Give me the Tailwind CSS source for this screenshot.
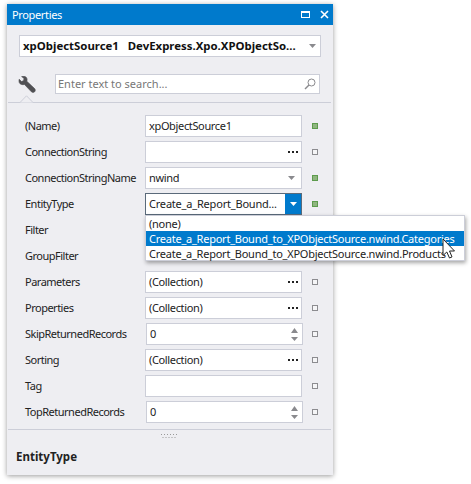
<!DOCTYPE html>
<html><head><meta charset="utf-8"><script src="https://cdn.jsdelivr.net/npm/@tailwindcss/browser@4"></script></head>
<body class="bg-white">
<div class="w-[471px] h-[484px] overflow-hidden pt-[4px] pl-[7px] font-['Noto_Sans',sans-serif] text-[11px] leading-[16px] tracking-[-0.35px] text-[#222]">
<div class="relative w-[326px] h-[471px] bg-[#eeeef2] shadow-[0_1px_5px_rgba(0,0,0,0.4)] flex flex-col">
  <div class="h-[21px] bg-[#007acc] text-white flex items-center pl-[5px] pr-[4px] shrink-0">
    <span class="flex-1">Properties</span>
    <svg width="9" height="7" class="mr-[10px]"><rect x="0.5" y="1" width="8" height="5.500" fill="none" stroke="#fff"/><rect x="0" y="0" width="9" height="2" fill="#fff"/></svg>
    <svg width="9" height="9"><path d="M1 1L8 8M8 1L1 8" stroke="#fff" stroke-width="1.600"/></svg>
  </div>
  <div class="mt-[10px] mx-[12px] h-[22px] bg-white border border-[#ccced8] flex items-center pl-[3px] pr-[4px] shrink-0">
    <span class="flex-1 min-w-0 font-bold text-[11.4px] tracking-normal text-[#111] whitespace-pre">xpObjectSource1   DevExpress.Xpo.XPObjectSo...</span>
    <svg width="7" height="4" class="shrink-0"><path d="M0 0H7L3.500 4Z" fill="#8a8a8e"/></svg>
  </div>
  <div class="mt-[17px] ml-[1px] mr-[2px] h-[29px] relative shrink-0 border-b border-[#ccced8] flex items-start pl-[10px] pr-[11px]">
    <svg width="18" height="18" viewBox="0 0 18 18" class="mt-[2px] mr-[19px] shrink-0"><path d="M1.200 3.200L3.600 5.600L5.600 4.600L6 2.400L3.600 0.600C5.600-.2 8 .3 8.800 2.200C9.300 3.300 9.100 4.600 8.800 5.200L16.600 12.600C17.600 13.600 17.400 15 16.600 15.800C15.800 16.600 14.400 16.700 13.400 15.800L6.400 8.400C4.800 9 2.800 8.600 1.600 7.200C.9 6.200.8 4.600 1.200 3.200Z" fill="#505054" stroke="#505054" stroke-width=".6"/></svg>
    <div class="flex-1 h-[20px] bg-white border border-[#ccced8] flex items-center pl-[2px] pr-[3px] text-[#777] tracking-normal">
      <span class="flex-1">Enter text to search...</span>
      <svg width="12" height="12" viewBox="0 0 12 12"><circle cx="7.500" cy="4.500" r="3.500" fill="none" stroke="#8a8a8e"/><path d="M5 7L1 11" stroke="#8a8a8e" stroke-width="1.500"/></svg>
    </div>
    <svg width="16" height="8" class="absolute left-[11px] bottom-[-1px]"><path d="M0 7.500H1L7.500 .8L14 7.500H16" fill="#eeeef2" stroke="#ccced8"/></svg>
  </div>
  <div class="flex flex-col pt-[10px] pl-[18px] shrink-0">
    <div class="h-[26px] flex items-center"><span class="w-[120px] shrink-0 tracking-[-0.5px]">(Name)</span><div class="w-[157px] h-[22px] bg-white border border-[#ccced8] flex items-center pl-[3px]">xpObjectSource1</div><div class="ml-[10px] w-[6px] h-[6px] bg-[#8fb67f] border border-[#5d9b4d]"></div></div>
    <div class="h-[26px] flex items-center"><span class="w-[120px] shrink-0 tracking-[-0.5px]">ConnectionString</span><div class="w-[157px] h-[22px] bg-white border border-[#ccced8] flex items-center justify-end pr-[3px]"><svg width="10" height="2"><path d="M0 0h2v2H0zM4 0h2v2H4zM8 0h2v2H8z" fill="#222"/></svg></div><div class="ml-[10px] w-[6px] h-[6px] bg-[#f5f5f7] border border-[#8c8c90]"></div></div>
    <div class="h-[26px] flex items-center"><span class="w-[120px] shrink-0 tracking-[-0.5px]">ConnectionStringName</span><div class="w-[157px] h-[22px] bg-white border border-[#ccced8] flex items-center pl-[3px] pr-[6px]"><span class="flex-1">nwind</span><svg width="7" height="4"><path d="M0 0H7L3.500 4Z" fill="#8a8a8e"/></svg></div><div class="ml-[10px] w-[6px] h-[6px] bg-[#8fb67f] border border-[#5d9b4d]"></div></div>
    <div class="h-[26px] flex items-center"><span class="w-[120px] shrink-0 tracking-[-0.5px]">EntityType</span><div class="w-[157px] h-[22px] bg-white border border-[#5a6a7a] flex items-center pl-[3px]"><span class="flex-1 min-w-0 whitespace-nowrap overflow-hidden tracking-[-0.2px]">Create_a_Report_Bound...</span><div class="w-[16px] h-full bg-[#007acc] flex items-center justify-center shrink-0"><svg width="7" height="4"><path d="M0 0H7L3.500 4Z" fill="#fff"/></svg></div></div><div class="ml-[10px] w-[6px] h-[6px] bg-[#8fb67f] border border-[#5d9b4d]"></div></div>
    <div class="h-[26px] flex items-center"><span class="w-[120px] shrink-0 tracking-[-0.5px]">Filter</span></div>
    <div class="h-[26px] flex items-center"><span class="w-[120px] shrink-0 tracking-[-0.5px]">GroupFilter</span></div>
    <div class="h-[26px] flex items-center"><span class="w-[120px] shrink-0 tracking-[-0.5px]">Parameters</span><div class="w-[157px] h-[22px] bg-white border border-[#ccced8] flex items-center pl-[3px] pr-[3px]"><span class="flex-1">(Collection)</span><svg width="10" height="2"><path d="M0 0h2v2H0zM4 0h2v2H4zM8 0h2v2H8z" fill="#222"/></svg></div><div class="ml-[10px] w-[6px] h-[6px] bg-[#f5f5f7] border border-[#8c8c90]"></div></div>
    <div class="h-[26px] flex items-center"><span class="w-[120px] shrink-0 tracking-[-0.5px]">Properties</span><div class="w-[157px] h-[22px] bg-white border border-[#ccced8] flex items-center pl-[3px] pr-[3px]"><span class="flex-1">(Collection)</span><svg width="10" height="2"><path d="M0 0h2v2H0zM4 0h2v2H4zM8 0h2v2H8z" fill="#222"/></svg></div><div class="ml-[10px] w-[6px] h-[6px] bg-[#f5f5f7] border border-[#8c8c90]"></div></div>
    <div class="h-[26px] flex items-center"><span class="w-[121px] shrink-0 tracking-[-0.5px]">SkipReturnedRecords</span><div class="w-[157px] h-[22px] bg-white border border-[#ccced8] flex items-center pl-[3px] pr-[4px]"><span class="flex-1">0</span><svg width="7" height="13"><path d="M0 5L3.500 0L7 5ZM0 9H7L3.500 13Z" fill="#8a8a8e"/></svg></div><div class="ml-[9px] w-[6px] h-[6px] bg-[#f5f5f7] border border-[#8c8c90]"></div></div>
    <div class="h-[26px] flex items-center"><span class="w-[120px] shrink-0 tracking-[-0.5px]">Sorting</span><div class="w-[157px] h-[22px] bg-white border border-[#ccced8] flex items-center pl-[3px] pr-[3px]"><span class="flex-1">(Collection)</span><svg width="10" height="2"><path d="M0 0h2v2H0zM4 0h2v2H4zM8 0h2v2H8z" fill="#222"/></svg></div><div class="ml-[10px] w-[6px] h-[6px] bg-[#f5f5f7] border border-[#8c8c90]"></div></div>
    <div class="h-[26px] flex items-center"><span class="w-[120px] shrink-0 tracking-[-0.5px]">Tag</span><div class="w-[157px] h-[22px] bg-white border border-[#ccced8]"></div><div class="ml-[10px] w-[6px] h-[6px] bg-[#f5f5f7] border border-[#8c8c90]"></div></div>
    <div class="h-[26px] flex items-center"><span class="w-[121px] shrink-0 tracking-[-0.5px]">TopReturnedRecords</span><div class="w-[157px] h-[22px] bg-white border border-[#ccced8] flex items-center pl-[3px] pr-[4px]"><span class="flex-1">0</span><svg width="7" height="13"><path d="M0 5L3.500 0L7 5ZM0 9H7L3.500 13Z" fill="#8a8a8e"/></svg></div><div class="ml-[9px] w-[6px] h-[6px] bg-[#f5f5f7] border border-[#8c8c90]"></div></div>
  </div>
  <div class="mt-[4px] ml-[1px] mr-[2px] border-t border-[#ccced8] flex flex-col items-center shrink-0">
    <svg width="18" height="6" class="mt-[3px]"><path d="M0 1h1v1H0zM3 1h1v1H3zM6 1h1v1H6zM9 1h1v1H9zM12 1h1v1H12zM15 1h1v1H15zM1.500 4h1v1h-1zM4.500 4h1v1h-1zM7.500 4h1v1h-1zM10.500 4h1v1h-1zM13.500 4h1v1h-1z" fill="#999"/></svg>
  </div>
  <div class="mt-[10px] ml-[9px] font-bold text-[11.5px] tracking-normal text-[#222] shrink-0">EntityType</div>
  <div class="absolute left-[138px] top-[211px] w-[320px] h-[46px] bg-white border border-[#ccced8] shadow-[1px_2px_4px_rgba(0,0,0,0.35)] pl-[3px] py-0 tracking-[-0.24px]">
    <div class="h-[15px] leading-[15px]">(none)</div>
    <div class="h-[15px] leading-[15px] bg-[#007acc] text-white -ml-[3px] pl-[3px]">Create_a_Report_Bound_to_XPObjectSource.nwind.Categories</div>
    <div class="h-[15px] leading-[15px] whitespace-nowrap">Create_a_Report_Bound_to_XPObjectSource.nwind.Products</div>
    <svg width="14" height="22" viewBox="0 0 14 22" class="absolute left-[296px] top-[22px]"><path d="M1 1V17.500L4.800 14L7.500 20L10 18.900L7.500 13H12.500Z" fill="#fff" stroke="#222" stroke-width="1"/></svg>
  </div>
</div>
</div>
</body></html>
